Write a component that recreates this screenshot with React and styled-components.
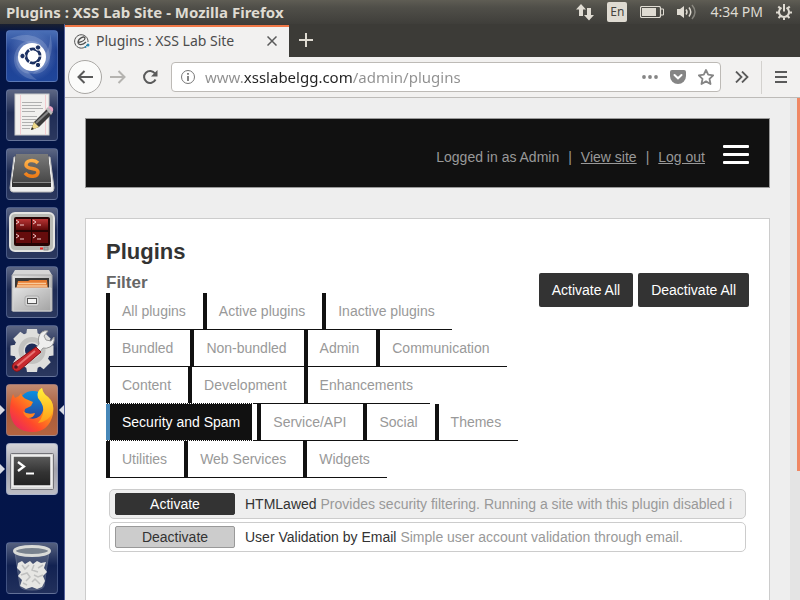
import React from "react";
import styled, { createGlobalStyle, css } from "styled-components";

const uiFont = '"Noto Sans", "Open Sans", sans-serif';
const pageFont = '"Liberation Sans", Arial, sans-serif';

const GlobalStyle = createGlobalStyle`
  *, *::before, *::after { box-sizing: border-box; }
  body { margin: 0; background: #eeeeee; overflow: hidden; }
  button, input { font: inherit; }
  svg { display: block; flex: none; }
`;

const Desktop = styled.div`
  display: flex;
  flex-direction: column;
  height: 100vh;
  overflow: hidden;
  font-family: ${uiFont};
`;

const Panel = styled.header`
  display: flex;
  align-items: center;
  justify-content: space-between;
  flex: none;
  height: 24px;
  padding: 0 8px 0 6px;
  background: linear-gradient(#5f5d54, #504f49 30%, #3f3e3a);
  color: #dfdbd2;
`;

const WindowTitle = styled.span`
  font-size: 15px;
  line-height: 24px;
  font-weight: 700;
  white-space: nowrap;
`;

const Indicators = styled.div`
  display: flex;
  align-items: center;
  gap: 13px;
`;

const Language = styled.span`
  width: 20px;
  height: 20px;
  border-radius: 2px;
  background: #dfdbd2;
  color: #45443f;
  font-size: 12px;
  line-height: 20px;
  text-align: center;
`;

const Clock = styled.time`
  font-size: 14px;
  line-height: 24px;
  white-space: nowrap;
`;

const Workspace = styled.div`
  display: flex;
  flex: 1;
  min-height: 0;
`;

const Launcher = styled.nav`
  display: flex;
  flex-direction: column;
  gap: 7px;
  flex: none;
  width: 65px;
  padding: 6px 0 6px 6px;
  background: linear-gradient(#1a2030, #041545 8px, #04154a);
  border-right: 1px solid #56629a;
`;

const tileSkins = {
  glass: "linear-gradient(#5d6784, #1f2c55 45%, #2b385f)",
  ubuntu: "linear-gradient(#4a6fb6, #1e3f91 40%, #1f469b)",
  firefox: "linear-gradient(#c28a70, #a85c3a 50%, #b56440)",
  silver: "linear-gradient(#d4d4d8, #a3a3ab 50%, #bdbdc4)",
  trash: "linear-gradient(#56617f, #122252 45%, #22305c)",
};

const Tile = styled.button`
  position: relative;
  flex: none;
  width: 52px;
  height: 52px;
  padding: 0;
  border: 1px solid rgba(120, 140, 190, 0.4);
  border-radius: 4px;
  background: ${(p) => tileSkins[p.$skin]};
  background-clip: border-box;
  ${(p) => p.$last && css`margin-top: auto;`}
  ${(p) =>
    p.$running &&
    css`
      &::before {
        content: "";
        position: absolute;
        left: -7px;
        top: 20px;
        border: 5px solid transparent;
        border-left-color: #d8dbe4;
        border-right-width: 0;
      }
    `}
  ${(p) =>
    p.$focused &&
    css`
      &::after {
        content: "";
        position: absolute;
        right: -7px;
        top: 20px;
        border: 5px solid transparent;
        border-right-color: #d8dbe4;
        border-left-width: 0;
      }
    `}
`;

const Browser = styled.div`
  display: flex;
  flex-direction: column;
  flex: 1;
  min-width: 0;
`;

const TabStrip = styled.div`
  display: flex;
  flex: none;
  height: 33px;
  padding-top: 1px;
  background: #3c3b37;
  color: #dfdbd2;
`;

const Tab = styled.div`
  display: flex;
  align-items: center;
  gap: 6px;
  width: 224px;
  padding: 0 11px 2px 9px;
  border-top: 2px solid #f07746;
  background: #f2f1f0;
  color: #4c4c4c;
  font-size: 14px;
  line-height: 20px;
`;

const TabLabel = styled.span`
  flex: 1;
  white-space: nowrap;
`;

const IconButton = styled.button`
  display: flex;
  align-items: center;
  justify-content: center;
  flex: none;
  width: ${(p) => p.$width || 16}px;
  height: ${(p) => p.$height || 28}px;
  padding: 0;
  border: 0;
  background: none;
  color: ${(p) => p.$color || "#5a5a5a"};
`;

const NavBar = styled.div`
  display: flex;
  align-items: center;
  flex: none;
  height: 41px;
  padding: 0 11px 0 3px;
  border-bottom: 1px solid #bdbbb8;
  background: #f2f1f0;
`;

const BackButton = styled(IconButton)`
  width: 34px;
  height: 34px;
  border: 1px solid #a9a7a4;
  border-radius: 50%;
  background: #fbfbfa;
`;

const AddressBar = styled.label`
  display: flex;
  align-items: center;
  flex: 1;
  min-width: 0;
  height: 30px;
  margin: 0 13px 0 5px;
  padding: 0 6px 0 8px;
  border: 1px solid #bdbab6;
  border-radius: 4px;
  background: #ffffff;
`;

const AddressInput = styled.input`
  flex: 1;
  min-width: 0;
  height: 24px;
  margin-left: 9px;
  padding: 0;
  border: 0;
  outline: 0;
  color: #333333;
  font-size: 15px;
  background: linear-gradient(90deg, #8f8f8f 39px, #222222 39px, #222222 147px, #8f8f8f 147px);
  background-clip: text;
  -webkit-background-clip: text;
  -webkit-text-fill-color: transparent;
`;

const PageActions = styled.div`
  display: flex;
  gap: 12px;
`;

const Divider = styled.span`
  width: 1px;
  height: 33px;
  margin: 0 11px;
  background: #d3d1ce;
`;

const Viewport = styled.div`
  display: flex;
  flex: 1;
  min-height: 0;
  background: #eeeeee;
  font-family: ${pageFont};
  font-size: 14px;
  line-height: 20px;
`;

const Page = styled.div`
  display: flex;
  flex-direction: column;
  gap: 30px;
  flex: 1;
  min-width: 0;
  padding: 20px 20px 0;
`;

const ScrollTrack = styled.div`
  flex: none;
  width: 10px;
  padding-left: 7px;
  background: #e4e4e4;
`;

const ScrollThumb = styled.div`
  height: 373px;
  background: #f08763;
`;

const SiteHeader = styled.header`
  display: flex;
  align-items: center;
  justify-content: flex-end;
  gap: 18px;
  flex: none;
  height: 70px;
  padding: 2px 20px 0;
  border: 1px solid #999999;
  background: #111111;
  color: #999999;
`;

const UserMenu = styled.div`
  display: flex;
  gap: 9px;
  padding-top: 6px;
  white-space: nowrap;
`;

const UserLink = styled.a`
  color: #999999;
  text-decoration: underline;
`;

const MenuButton = styled.button`
  display: flex;
  flex-direction: column;
  gap: 5px;
  width: 26px;
  padding: 0;
  border: 0;
  background: none;
`;

const MenuBar = styled.span`
  width: 100%;
  height: 3px;
  border-radius: 1px;
  background: #ffffff;
`;

const Content = styled.main`
  flex: 1;
  padding: 20px;
  border: 1px solid #cccccc;
  border-bottom: 0;
  background: #ffffff;
`;

const Title = styled.h1`
  margin: 0;
  color: #333333;
  font-size: 22px;
  line-height: 26px;
`;

const Tools = styled.div`
  display: flex;
  align-items: flex-start;
  padding-top: 8px;
`;

const FilterBlock = styled.section`
  flex: 1;
  min-width: 0;
`;

const FilterTitle = styled.h2`
  margin: 0;
  color: #666666;
  font-size: 17px;
  line-height: 20px;
`;

const FilterList = styled.ul`
  display: flex;
  flex-wrap: wrap;
  margin: 0;
  padding: 0 10px 0 0;
  list-style: none;
`;

const FilterItem = styled.li`
  height: 37px;
  padding-right: 5px;
  border-bottom: 1px solid #111111;
`;

const FilterLink = styled.a`
  display: block;
  height: 36px;
  padding: 0 12px;
  border-left: 4px solid ${(p) => (p.$selected ? "#4787b8" : "#111111")};
  outline: ${(p) => (p.$selected ? "1px dotted #ffffff" : "0")};
  background: ${(p) => (p.$selected ? "#111111" : "#ffffff")};
  color: ${(p) => (p.$selected ? "#ffffff" : "#999999")};
  line-height: 36px;
  text-decoration: none;
  white-space: nowrap;
`;

const BulkActions = styled.div`
  display: flex;
  gap: 5px;
`;

const BulkButton = styled.button`
  height: 34px;
  padding: 0 13px;
  border: 0;
  border-radius: 2px;
  background: #333333;
  color: #ffffff;
  white-space: nowrap;
`;

const PluginList = styled.ul`
  display: flex;
  flex-direction: column;
  gap: 3px;
  margin: 0;
  padding: 11px 3px 0;
  list-style: none;
`;

const PluginRow = styled.li`
  display: flex;
  align-items: center;
  gap: 10px;
  height: 30px;
  padding: 0 5px;
  border: 1px solid #cccccc;
  border-radius: 5px;
  background: ${(p) => (p.$active ? "#ffffff" : "#eeeeee")};
`;

const StateButton = styled.button`
  flex: none;
  width: 120px;
  height: 22px;
  padding: 0;
  border: 1px solid ${(p) => (p.$active ? "#999999" : "#333333")};
  border-radius: 2px;
  background: ${(p) => (p.$active ? "#cccccc" : "#333333")};
  color: ${(p) => (p.$active ? "#333333" : "#ffffff")};
  line-height: 20px;
`;

const PluginText = styled.p`
  flex: 1;
  min-width: 0;
  margin: 0;
  overflow: hidden;
  color: #999999;
  white-space: nowrap;
`;

const PluginName = styled.span`
  color: #333333;
`;

const UbuntuIcon = () => (
  <svg width="50" height="50" viewBox="0 0 50 50">
    <defs><radialGradient id="ub-glow"><stop stopColor="#9fb6e6" stopOpacity=".6" /><stop offset="1" stopColor="#9fb6e6" stopOpacity="0" /></radialGradient></defs>
    <circle cx="25" cy="25" r="25" fill="url(#ub-glow)" />
    <g fill="#d5e0f7" fillOpacity=".2">
      <path d="M3 8C22-2 44 8 43 28 42 38 34 44 25 43 38 36 40 10 3 8Z" />
      <path d="M43 3C50 26 36 46 18 42 10 38 8 30 10 24 16 38 44 36 43 3Z" />
      <path d="M30 49C8 48 0 26 14 13 22 8 30 10 34 14 18 12 6 32 30 49Z" />
    </g>
    <circle cx="25" cy="26" r="14" fill="#fff" />
    <circle cx="26" cy="25" r="7" fill="none" stroke="#1c3163" strokeWidth="3" />
    <path d="M26 25L20 14.500M26 25H36M26 25L20 35.500" stroke="#fff" strokeWidth="1.200" />
    <g stroke="#fff" strokeWidth="1" fill="#1c3163">
      <circle cx="15.500" cy="25" r="2.700" />
      <circle cx="31" cy="16.500" r="2.700" />
      <circle cx="31" cy="34" r="2.700" />
    </g>
    <circle cx="26" cy="25" r="5.400" fill="#fff" />
  </svg>
);

const EditorIcon = () => (
  <svg width="50" height="50" viewBox="0 0 50 50">
    <rect x="8" y="4" width="34" height="41" fill="#f1f0ee" stroke="#c9c9c9" />
    <path d="M13.500 5V45M38.500 5V45" stroke="#f3ccd0" strokeWidth="1" />
    <path d="M15 12.500H35M15 15.500H34M15 18.500H36M15 21.500H28M15 26.500H30M15 29.500H29M15 32.500H27M15 35.500H26M15 38.500H23" stroke="#b0b0b0" />
    <path d="M24 40L27 32 41 18 46 23 32 37Z" fill="#3a3a3a" />
    <path d="M29 33L43 20" stroke="#858585" strokeWidth="2" />
    <path d="M24 40L27 32 32 37Z" fill="#eed98b" />
    <path d="M24 40L25 37 27 39Z" fill="#222" />
    <path d="M39 19L41 17 46 22 44 25Z" fill="#bbb" />
    <path d="M41 17L43 16Q47 17 46 21L45 22Z" fill="#e9a5c4" />
  </svg>
);

const SublimeIcon = () => (
  <svg width="50" height="50" viewBox="0 0 50 50">
    <defs>
      <linearGradient id="sub-key" x2="0" y2="1"><stop stopColor="#7a7a7a" /><stop offset="1" stopColor="#484848" /></linearGradient>
      <linearGradient id="sub-s" x2="0" y2="1"><stop stopColor="#ffb24a" /><stop offset="1" stopColor="#ee7c18" /></linearGradient>
    </defs>
    <path d="M7 8H43L47 39Q47 43 44 43H6Q3 43 3 39Z" fill="#eee" stroke="#bbb" />
    <path d="M9 5H41L44 34V38H5V34Z" fill="#303030" />
    <path d="M9 5H41L44 33H5Z" fill="url(#sub-key)" />
    <path d="M6 33.500H44" stroke="#8a8a8a" />
    <path d="M31 14C27 10 19 11 19 16 19 21 31 18 31 23 31 28 22 29 18 24" fill="none" stroke="url(#sub-s)" strokeWidth="3.500" />
  </svg>
);

const TerminatorIcon = () => (
  <svg width="50" height="50" viewBox="0 0 50 50">
    <defs><linearGradient id="tm" x2="0" y2="1"><stop stopColor="#b93434" /><stop offset="1" stopColor="#5c0808" /></linearGradient></defs>
    <rect x="3" y="5" width="44" height="38" rx="5" fill="#b9bbb5" stroke="#e4e4e1" strokeWidth="2" />
    <rect x="7" y="9" width="36" height="29" rx="2" fill="#260404" />
    <path d="M9 11H24V22H9ZM25 11H41V22H25Z" fill="url(#tm)" />
    <path d="M9 24H24V35H9ZM25 24H41V35H25Z" fill="#650c0c" />
    <path d="M9 12L12 14 9 16M13 17H17M26 12L29 14 26 16M30 17H34M9 26L12 28 9 30M13 31H17M26 26L29 28 26 30M30 31H34" stroke="#f1caca" fill="none" />
    <rect x="33" y="39.500" width="3" height="2" fill="#e22" />
    <rect x="37" y="39" width="4" height="3" fill="#aaa" stroke="#888" />
  </svg>
);

const FilesIcon = () => (
  <svg width="50" height="50" viewBox="0 0 50 50">
    <defs><linearGradient id="cab" x2="1" y2="1"><stop stopColor="#e3e3e3" /><stop offset="1" stopColor="#a3a3a3" /></linearGradient></defs>
    <path d="M8 3H42L45 8V44H5V8Z" fill="#d6d6d6" />
    <path d="M5 8H45V44H5Z" fill="url(#cab)" stroke="#a8a8a8" />
    <rect x="8" y="11" width="34" height="15" fill="#383838" />
    <path d="M9 22L11 14H21L23 13H40L41 22Z" fill="#e67c32" />
    <path d="M11 16.500H39M10 19H40" stroke="#f9ca9c" strokeWidth="1.500" />
    <path d="M6 21H44V44H6Z" fill="url(#cab)" stroke="#d5d5d5" />
    <rect x="18" y="29" width="14" height="10" rx="2" fill="#d6d6d6" stroke="#aaa" />
    <rect x="20.500" y="31.500" width="9" height="5" fill="#f3f3f3" stroke="#555" />
  </svg>
);

const SettingsIcon = () => (
  <svg width="50" height="50" viewBox="0 0 50 50">
    <g fill="#dededc">
      {[0, 45, 90, 135].map((a) => (
        <path key={a} d="M20 3H30L31 10V40L30 46H20L19 40V10Z" transform={`rotate(${a} 25 24.500)`} />
      ))}
      <circle cx="25" cy="24.500" r="18" />
    </g>
    <circle cx="25" cy="24.500" r="11" fill="none" stroke="#c2c2c0" strokeWidth="5" />
    <circle cx="25" cy="24.500" r="7" fill="#1d2b58" />
    <path d="M28 23L32 18Q30 10 35 6 38 4 41 5L37 10 39 14 44 15 47 11Q48 18 43 21 39 23 36 22L32 27Z" fill="#eee" stroke="#999" />
    <path d="M29 21L34 26 13 44Q9 47 6 43 4 40 7 37Z" fill="#c82a2f" stroke="#8b1115" />
    <path d="M28 25L10 40" stroke="#e87473" strokeWidth="2" />
    <circle cx="9" cy="41" r="1.800" fill="#4c1825" />
  </svg>
);

const FirefoxIcon = () => (
  <svg width="50" height="50" viewBox="0 0 50 50">
    <defs>
      <linearGradient id="ff-o" x1=".9" y1=".1" x2=".1" y2="1"><stop stopColor="#ffd42f" /><stop offset=".35" stopColor="#ff8a1c" /><stop offset=".65" stopColor="#ff4a2a" /><stop offset="1" stopColor="#e62068" /></linearGradient>
      <linearGradient id="ff-b" x2="0" y2="1"><stop stopColor="#0a8fe0" /><stop offset="1" stopColor="#2b3f95" /></linearGradient>
      <linearGradient id="ff-t" x2="0" y2="1"><stop stopColor="#fff23a" /><stop offset="1" stopColor="#ff9b18" /></linearGradient>
    </defs>
    <circle cx="26" cy="21" r="15" fill="url(#ff-b)" />
    <path d="M6 9L8 13 12 11 14 8Q15 12 19 14L26 17 24 21 18 24Q16 30 22 33 28 35 33 31 38 25 36 19 31 13 31 7 32 4 35 3 36 9 41 12 48 19 46 29 42 47 25 47 5 46 3 27 3 16 6 9Z" fill="url(#ff-o)" />
    <path d="M35 3Q29 7 31 13 38 21 36 29 34 35 31 38 43 36 46 26 47 17 41 12 36 9 35 3Z" fill="url(#ff-t)" />
    <path d="M16 26Q20 30 28 28 27 33 21 33 17 31 16 26Z" fill="#ff8420" />
  </svg>
);

const TerminalIcon = () => (
  <svg width="50" height="50" viewBox="0 0 50 50">
    <defs><linearGradient id="term" x2="0" y2="1"><stop stopColor="#5c5c5c" /><stop offset=".55" stopColor="#333" /><stop offset="1" stopColor="#222" /></linearGradient></defs>
    <rect x="3.500" y="9.500" width="43" height="36" rx="1" fill="#dadada" stroke="#737379" />
    <rect x="6" y="12" width="38" height="30" fill="url(#term)" stroke="#f3f3f3" strokeWidth="1.500" />
    <path d="M11 18L17 22.500 11 27" fill="none" stroke="#fff" strokeWidth="2.300" />
    <path d="M19 29.500H27" stroke="#fff" strokeWidth="2" />
  </svg>
);

const TrashIcon = () => (
  <svg width="50" height="50" viewBox="0 0 50 50">
    <path d="M8 9L13 43Q14 47 25 47 36 47 37 43L42 9Z" fill="#7d8799" opacity=".4" stroke="#aab1bd" />
    <path d="M11 20L15 18 18 21 23 18 26 21 30 18 34 20 39 19 37 25 40 29 36 33 38 38 35 44 30 46 25 44 19 46 13 43 15 37 11 33 14 29 10 25Z" fill="#e6e6e3" />
    <path d="M15 22L18 26 22 22M27 22L25 27 31 29M36 22L31 25M14 32L20 30 23 34 19 38M27 32L31 34 36 32M25 39L28 36 33 41M16 40L20 42" fill="none" stroke="#c0c1c0" strokeWidth="1.500" />
    <ellipse cx="25" cy="8" rx="17.500" ry="4.500" fill="#79828e" stroke="#dadbd8" strokeWidth="3" />
  </svg>
);

const launcherItems = [
  { label: "Search your computer", skin: "ubuntu", Icon: UbuntuIcon },
  { label: "Text Editor", skin: "glass", Icon: EditorIcon },
  { label: "Sublime Text", skin: "glass", Icon: SublimeIcon },
  { label: "Terminator", skin: "glass", Icon: TerminatorIcon },
  { label: "Files", skin: "glass", Icon: FilesIcon },
  { label: "System Settings", skin: "glass", Icon: SettingsIcon },
  { label: "Firefox Web Browser", skin: "firefox", Icon: FirefoxIcon, running: true, focused: true },
  { label: "Terminal", skin: "silver", Icon: TerminalIcon, running: true },
  { label: "Trash", skin: "trash", Icon: TrashIcon, last: true },
];

const filters = [
  "All plugins", "Active plugins", "Inactive plugins", "Bundled", "Non-bundled", "Admin",
  "Communication", "Content", "Development", "Enhancements", "Security and Spam",
  "Service/API", "Social", "Themes", "Utilities", "Web Services", "Widgets",
];

const plugins = [
  { name: "HTMLawed", text: "Provides security filtering. Running a site with this plugin disabled i", active: false },
  { name: "User Validation by Email", text: "Simple user account validation through email.", active: true },
];

function TopPanel() {
  return (
    <Panel>
      <WindowTitle>Plugins : XSS Lab Site - Mozilla Firefox</WindowTitle>
      <Indicators>
        <svg width="18" height="18" viewBox="0 0 18 18" fill="#dfdbd2">
          <path d="M5 1L10 6.500H7V13H3V6.500H0ZM13 17.500L8 12H11V5H15V12H18Z" />
        </svg>
        <Language>En</Language>
        <svg width="24" height="12" viewBox="0 0 24 12" fill="none" stroke="#dfdbd2">
          <rect x=".500" y=".500" width="20" height="11" rx="1.500" strokeWidth="1.200" />
          <path d="M21 3H23.500V9H21" />
          <rect x="2" y="2" width="14" height="8" fill="#dfdbd2" stroke="none" />
        </svg>
        <svg width="20" height="16" viewBox="0 0 20 16" fill="none" stroke="#dfdbd2" strokeWidth="1.500">
          <path d="M0 5H3L7 2V14L3 11H0Z" fill="#dfdbd2" stroke="none" />
          <path d="M9 5.500Q11 8 9 10.500M12 3.500Q15.500 8 12 12.500" />
          <path d="M15 1Q21 8 15 15" opacity=".4" />
        </svg>
        <Clock>4:34 PM</Clock>
        <svg width="16" height="16" viewBox="0 0 16 16" fill="none" stroke="#dfdbd2" strokeWidth="2">
          <path d="M5.500 3.700A5 5 0 1 0 10.500 3.700M8 0V7.500M0 8.500H3M13 8.500H16M2.300 2.500L4.300 4.500M13.700 2.500L11.700 4.500M2.500 14L4.500 12M13.500 14L11.500 12M8 13.500V16" />
        </svg>
      </Indicators>
    </Panel>
  );
}

function BrowserTabs() {
  return (
    <TabStrip>
      <Tab>
        <svg width="16" height="16" viewBox="0 0 16 16" fill="none" stroke="#515151">
          <path d="M13 12A6.700 6.700 0 1 1 14 9" strokeWidth="1" />
          <path d="M4 9.500C8 9 11 7 11 5 10.500 2.500 4.500 5 4 9 4 13 9 12 12 9" strokeWidth="1.300" />
          <circle cx="14" cy="12" r="1.500" fill="#2688b4" stroke="none" />
          <circle cx="11.500" cy="14" r="1" fill="#2688b4" stroke="none" />
        </svg>
        <TabLabel>Plugins : XSS Lab Site</TabLabel>
        <IconButton aria-label="Close tab" $width={12}>
          <svg width="10" height="10" viewBox="0 0 10 10" stroke="currentColor" strokeWidth="1.500"><path d="M.500 .500L9.500 9.500M9.500 .500L.500 9.500" /></svg>
        </IconButton>
      </Tab>
      <IconButton aria-label="New tab" $width={34} $height={30} $color="#dfdbd2">
        <svg width="14" height="14" viewBox="0 0 14 14" stroke="currentColor" strokeWidth="2"><path d="M7 0V14M0 7H14" /></svg>
      </IconButton>
    </TabStrip>
  );
}

function BrowserToolbar() {
  return (
    <NavBar>
      <BackButton aria-label="Back">
        <svg width="16" height="14" viewBox="0 0 16 14" fill="none" stroke="currentColor" strokeWidth="2"><path d="M16 7H1.500M7.500 1L1.500 7 7.500 13" /></svg>
      </BackButton>
      <IconButton aria-label="Forward" $width={32} $color="#b5b3b0">
        <svg width="16" height="14" viewBox="0 0 16 14" fill="none" stroke="currentColor" strokeWidth="2"><path d="M0 7H14.500M8.500 1L14.500 7 8.500 13" /></svg>
      </IconButton>
      <IconButton aria-label="Reload" $width={32}>
        <svg width="16" height="16" viewBox="0 0 16 16" fill="none" stroke="currentColor" strokeWidth="2"><path d="M13.500 10.500A6 6 0 1 1 13 4.500" /><path d="M15.500 1V7.500H9Z" fill="currentColor" stroke="none" /></svg>
      </IconButton>
      <AddressBar>
        <svg width="16" height="16" viewBox="0 0 16 16" fill="none" stroke="#777"><circle cx="8" cy="8" r="6.500" /><path d="M8 7V12M8 4V5.700" strokeWidth="1.800" /></svg>
        <AddressInput aria-label="Address" defaultValue="www.xsslabelgg.com/admin/plugins" />
        <PageActions>
          <IconButton aria-label="Page actions" $color="#858585">
            <svg width="16" height="4" viewBox="0 0 16 4" fill="currentColor"><circle cx="2" cy="2" r="1.900" /><circle cx="8" cy="2" r="1.900" /><circle cx="14" cy="2" r="1.900" /></svg>
          </IconButton>
          <IconButton aria-label="Save to Pocket" $color="#858585">
            <svg width="16" height="14" viewBox="0 0 16 14"><path d="M2 0H14Q16 0 16 2V6A8 8 0 0 1 0 6V2Q0 0 2 0Z" fill="currentColor" /><path d="M4.500 5L8 8.300 11.500 5" fill="none" stroke="#fff" strokeWidth="2" strokeLinecap="round" /></svg>
          </IconButton>
          <IconButton aria-label="Bookmark" $color="#858585">
            <svg width="16" height="16" viewBox="0 0 16 16" fill="none" stroke="currentColor" strokeWidth="1.800" strokeLinejoin="round"><path d="M8 1L10.200 5.700 15.200 6.300 11.500 9.800 12.500 15 8 12.400 3.500 15 4.500 9.800 .800 6.300 5.800 5.700Z" /></svg>
          </IconButton>
        </PageActions>
      </AddressBar>
      <IconButton aria-label="More tools">
        <svg width="14" height="12" viewBox="0 0 14 12" fill="none" stroke="currentColor" strokeWidth="1.800"><path d="M1 .500L6.500 6 1 11.500M7 .500L12.500 6 7 11.500" /></svg>
      </IconButton>
      <Divider />
      <IconButton aria-label="Open menu">
        <svg width="12" height="12" viewBox="0 0 12 12" stroke="currentColor" strokeWidth="2"><path d="M0 1H12M0 6H12M0 11H12" /></svg>
      </IconButton>
    </NavBar>
  );
}

function PluginsPage() {
  return (
    <Page>
      <SiteHeader>
        <UserMenu>
          <span>Logged in as Admin</span>
          <span>|</span>
          <UserLink href="#site">View site</UserLink>
          <span>|</span>
          <UserLink href="#logout">Log out</UserLink>
        </UserMenu>
        <MenuButton aria-label="Menu"><MenuBar /><MenuBar /><MenuBar /></MenuButton>
      </SiteHeader>
      <Content>
        <Title>Plugins</Title>
        <Tools>
          <FilterBlock>
            <FilterTitle>Filter</FilterTitle>
            <FilterList>
              {filters.map((name) => {
                const selected = name === "Security and Spam";
                return (
                  <FilterItem key={name}>
                    <FilterLink href="#filter" $selected={selected}>{name}</FilterLink>
                  </FilterItem>
                );
              })}
            </FilterList>
          </FilterBlock>
          <BulkActions>
            <BulkButton>Activate All</BulkButton>
            <BulkButton>Deactivate All</BulkButton>
          </BulkActions>
        </Tools>
        <PluginList>
          {plugins.map((p) => (
            <PluginRow key={p.name} $active={p.active}>
              <StateButton $active={p.active}>{p.active ? "Deactivate" : "Activate"}</StateButton>
              <PluginText><PluginName>{p.name}</PluginName> {p.text}</PluginText>
            </PluginRow>
          ))}
        </PluginList>
      </Content>
    </Page>
  );
}

export default function App() {
  return (
    <Desktop>
      <GlobalStyle />
      <TopPanel />
      <Workspace>
        <Launcher>
          {launcherItems.map(({ label, skin, Icon, running, focused, last }) => (
            <Tile key={label} aria-label={label} $skin={skin} $running={running} $focused={focused} $last={last}>
              <Icon />
            </Tile>
          ))}
        </Launcher>
        <Browser>
          <BrowserTabs />
          <BrowserToolbar />
          <Viewport>
            <PluginsPage />
            <ScrollTrack><ScrollThumb /></ScrollTrack>
          </Viewport>
        </Browser>
      </Workspace>
    </Desktop>
  );
}
